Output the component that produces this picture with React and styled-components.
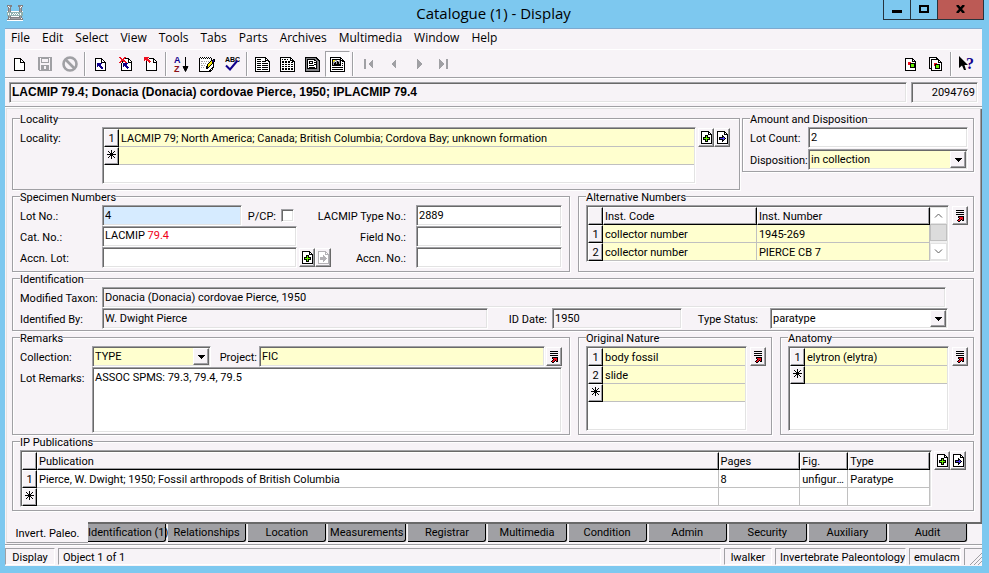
import React from "react";
import styled, { createGlobalStyle, css } from "styled-components";

const c = {
  sky: "#7dc8ef",
  face: "#f7f3f7",
  grey: "#a0a0a4",
  dark: "#696969",
  light: "#e3e3e3",
  line: "#c0c0c0",
  yellow: "#ffffcf",
};

const Global = createGlobalStyle`
  *, *::before, *::after { box-sizing: border-box; }
  body { margin: 0; background: ${c.sky}; }
  body, button, input, select, textarea {
    font-family: Roboto, "Liberation Sans", sans-serif;
    font-size: 11px;
    line-height: 13px;
    color: #000;
  }
`;

const sunken = css`
  border: 1px solid;
  border-color: ${c.grey} #fff #fff ${c.grey};
  box-shadow: inset 1px 1px 0 ${c.dark}, inset -1px -1px 0 ${c.light};
`;

const raised = css`
  border: 1px solid;
  border-color: #fff ${c.dark} ${c.dark} #fff;
  box-shadow: inset -1px -1px 0 ${c.grey};
`;

/* ---------- window frame ---------- */

const Window = styled.div`
  min-height: 100vh;
  padding: 0 7px 6px 5px;
  background: ${c.sky};
`;

const TitleBar = styled.header`
  display: grid;
  grid-template-columns: 1fr auto 1fr;
  height: 28px;
`;

const TitleIcon = styled.div`
  padding: 5px 0 0 2px;
`;

const Title = styled.h1`
  margin: 0;
  font: 400 15px/26px "Open Sans", sans-serif;
`;

const WindowButtons = styled.div`
  display: flex;
  justify-content: flex-end;
  height: 20px;
  margin-right: -2px;
`;

const WindowButton = styled.button`
  display: flex;
  align-items: center;
  justify-content: center;
  width: ${(p) => (p.$close ? 47 : 28)}px;
  padding: 0 0 2px;
  border: 1px solid #26343e;
  border-top: 0;
  margin-left: -1px;
  background: ${(p) => (p.$close ? "#bc5a55" : "transparent")};
`;

const Client = styled.div`
  border-top: 1px solid #7da9cf;
  background: ${c.face};
`;

const MenuBar = styled.nav`
  display: flex;
  height: 21px;
  border-bottom: 1px solid #fff;
`;

const MenuItem = styled.button`
  padding: 0 6px 2px;
  border: 0;
  background: none;
  font: 400 12px/18px "Open Sans", sans-serif;
`;

const ToolBar = styled.div`
  display: flex;
  height: 29px;
  padding: 0 3px 0 2px;
  border-bottom: 1px solid #fff;
  box-shadow: inset 0 -1px 0 ${c.grey};
`;

const ToolButton = styled.button`
  display: flex;
  align-items: center;
  justify-content: center;
  width: 25px;
  height: 26px;
  margin-top: 1px;
  padding: 0;
  border: 1px solid transparent;
  background: none;
  ${(p) =>
    p.$pressed &&
    css`
      border-color: ${c.grey} #fff #fff ${c.grey};
      background: #fdfbfd;
    `}
`;

const ToolSeparator = styled.i`
  width: 2px;
  height: 24px;
  margin: 2px;
  background: linear-gradient(90deg, ${c.grey} 50%, #fff 50%);
`;

const Spacer = styled.div`
  flex: 1;
`;

const RecordStrip = styled.div`
  display: flex;
  gap: 4px;
  padding: 3px 4px;
  height: 29px;
  border-bottom: 1px solid #fff;
  box-shadow: inset 0 -1px 0 ${c.grey};
`;

const RecordTitle = styled.div`
  flex: 1;
  height: 21px;
  padding: 0 2px;
  ${sunken}
  font-family: "Liberation Sans", Arial, sans-serif;
  font-size: 12px;
  font-weight: 700;
  line-height: 18px;
`;

const RecordNumber = styled.div`
  width: 67px;
  height: 21px;
  padding: 0 2px;
  ${sunken}
  text-align: right;
  font-size: 11px;
  line-height: 19px;
`;

/* ---------- form ---------- */

const Panel = styled.main`
  margin: 0 0 0 1px;
  padding: 3px 8px 11px 5px;
  border: solid ${c.light};
  border-width: 1px 0 0 1px;
  box-shadow: inset -1px 0 0 ${c.dark}, inset -2px 0 0 ${c.grey};
`;

const Columns = styled.div`
  display: grid;
  grid-template-columns: ${(p) => p.$parts.map((n) => `minmax(0, ${n}fr)`).join(" ")};
  column-gap: ${(p) => p.$gap}px;
  align-items: ${(p) => p.$align || "stretch"};
`;

const Group = styled.fieldset`
  min-width: 0;
  margin: 0;
  padding: 2px ${(p) => p.$right || 5}px ${(p) => p.$bottom || 1}px 7px;
  border: 1px solid ${c.grey};
  box-shadow: 1px 1px 0 #fff, inset 1px 1px 0 #fff;
`;

const Legend = styled.legend`
  padding: 0;
  height: 13px;
  line-height: 15px;
  background: ${c.face};
`;

const Row = styled.div`
  display: flex;
  align-items: flex-start;
  margin-bottom: ${(p) => p.$after || 0}px;
`;

const Label = styled.label`
  flex: none;
  width: ${(p) => (p.$width ? p.$width + "px" : "auto")};
  height: 21px;
  padding-right: ${(p) => p.$gap || 0}px;
  text-align: ${(p) => (p.$end ? "right" : "left")};
  line-height: 23px;
  white-space: nowrap;
`;

const share = css`
  flex: ${(p) => (p.$fixed ? `none` : `${p.$grow || 1} 1 ${p.$grow || 1}px`)};
  width: ${(p) => (p.$fixed ? p.$fixed + "px" : "auto")};
  min-width: 0;
`;

const fieldBox = css`
  ${share}
  height: 21px;
  margin: 0;
  padding: 0 2px 1px;
  ${sunken}
  border-radius: 0;
  outline: 0;
  background: ${(p) => p.$fill || "#fff"};
`;

const Field = styled.input`
  ${fieldBox}
`;

const FieldText = styled.output`
  ${fieldBox}
  line-height: 18px;
`;

const Red = styled.span`
  color: #f00018;
`;

const Memo = styled.textarea`
  flex: 1;
  min-width: 0;
  height: 66px;
  margin: 0;
  padding: 3px 2px 2px;
  ${sunken}
  border-radius: 0;
  outline: 0;
  resize: none;
  background: #fff;
`;

const CheckBox = styled.input`
  appearance: none;
  width: 13px;
  height: 13px;
  margin: 3px 0 0 4px;
  ${sunken}
  background: #fff;
`;

const Trailer = styled.div`
  display: flex;
  flex: none;
  width: ${(p) => p.$width}px;
  padding: 1px 0 0 ${(p) => p.$pad || 2}px;
`;

const SelectBox = styled.div`
  position: relative;
  display: flex;
  ${share}
`;

const Select = styled.select`
  ${fieldBox}
  appearance: none;
`;

const SelectArrow = styled.span`
  position: absolute;
  top: 2px;
  right: 2px;
  bottom: 2px;
  display: flex;
  align-items: center;
  justify-content: center;
  width: 16px;
  ${raised}
  background: ${c.face};
  pointer-events: none;
`;

const SmallButton = styled.button`
  display: flex;
  flex: none;
  align-items: center;
  justify-content: center;
  width: 16px;
  height: 19px;
  padding: 0;
  ${raised}
  background: ${c.face};
`;

const GridBox = styled.div`
  display: flex;
  flex: 1;
  align-items: flex-start;
  min-width: 0;
  height: ${(p) => p.$height || 57}px;
  padding: 1px;
  overflow: hidden;
  ${sunken}
  background: #fff;
`;

const Table = styled.table`
  flex: 1;
  width: 100%;
  min-width: 0;
  table-layout: fixed;
  border-collapse: separate;
  border-spacing: 0;
`;

const Col = styled.col`
  width: ${(p) => p.$w};
`;

const headCell = css`
  height: 18px;
  border: 1px solid;
  border-color: #fff #000 #000 #fff;
  box-shadow: inset -1px -1px 0 ${c.grey};
  background: ${c.face};
  font-weight: 400;
  line-height: 14px;
`;

const HeadCell = styled.th`
  padding: 2px 1px 0;
  ${headCell}
  text-align: left;
`;

const RowHead = styled.th`
  padding: ${(p) => (p.$marker ? 0 : 2)}px 0 0;
  ${headCell}
  text-align: center;
`;

const Cell = styled.td`
  height: 18px;
  padding: 2px 2px 0;
  border: solid ${c.line};
  border-width: 0 ${(p) => (p.$rule ? 1 : 0)}px 1px 0;
  background: ${(p) => p.$fill || "#fff"};
  line-height: 15px;
  white-space: nowrap;
  overflow: hidden;
  text-overflow: ellipsis;
`;

const ScrollBar = styled.div`
  display: flex;
  flex: none;
  flex-direction: column;
  width: 17px;
  height: 53px;
  background: #f0f0f0;
`;

const ScrollButton = styled.button`
  display: flex;
  align-items: center;
  justify-content: center;
  height: 17px;
  padding: 0;
  border: 1px solid ${c.light};
  background: #fff;
`;

const ScrollThumb = styled.div`
  height: 17px;
  margin-bottom: auto;
  border: 1px solid ${c.line};
  background: #dcdcdc;
`;

/* ---------- tabs and status bar ---------- */

const TabStrip = styled.nav`
  display: flex;
`;

const TabRun = styled.div`
  display: flex;
  flex: 1;
  min-width: 0;
  height: 20px;
  padding-right: 15px;
  border-top: 2px solid ${c.dark};
`;

const Tab = styled.button`
  flex: 1 1 0;
  min-width: 0;
  height: 18px;
  padding: 0 0 1px;
  border: solid #000;
  border-width: 0 1px 1px 0;
  border-bottom-right-radius: 3px;
  box-shadow: 1px 0 0 ${c.light};
  margin-right: 2px;
  background: ${c.grey};
  white-space: nowrap;
  &:last-child { margin-right: 0; }
`;

const ActiveTab = styled.button`
  flex: none;
  width: 82px;
  height: 21px;
  margin-left: 1px;
  padding: 3px 0 0;
  border: 0;
  border-left: 1px solid ${c.light};
  border-bottom: 1px solid ${c.grey};
  background: ${c.face};
`;

const StatusBar = styled.footer`
  display: flex;
  gap: 3px;
  margin-top: 1px;
  padding: 3px 0 1px;
  border-top: 1px solid ${c.grey};
  box-shadow: inset 0 1px 0 #fff;
`;

const StatusCell = styled.div`
  flex: ${(p) => (p.$fill ? 1 : "none")};
  width: ${(p) => (p.$width ? p.$width + "px" : "auto")};
  height: 17px;
  padding: 0 4px;
  border: 1px solid;
  border-color: ${c.grey} #fff #fff ${c.grey};
  text-align: ${(p) => (p.$center ? "center" : "left")};
  line-height: 18px;
  white-space: nowrap;
`;

const Grip = styled.div`
  display: flex;
  align-items: flex-end;
  justify-content: flex-end;
  width: 18px;
  height: 17px;
  border: solid ${c.grey};
  border-width: 1px 0 0 1px;
`;

/* ---------- icons ---------- */

const ink = {
  k: "#000", w: "#fff", g: "#66f000", b: "#10008c", v: "#4838e8",
  r: "#ee1020", y: "#f6e600", s: "#a0a0a4", m: "#808084", t: "#8fb0b0", n: "#8c1018",
};

function Pixels({ rows, tint }) {
  const w = Math.max(...rows.map((r) => r.length));
  return (
    <svg width={w} height={rows.length} shapeRendering="crispEdges" aria-hidden="true">
      {rows.flatMap((row, y) =>
        [...row].map((ch, x) =>
          ch === "." ? null : (
            <rect key={x + "-" + y} x={x} y={y} width="1" height="1"
              fill={tint && ch !== "w" ? tint : ink[ch]} />
          )
        )
      )}
    </svg>
  );
}

const sheet = [
  "kkkkkkk....", "kwwwwwkk...", "kwwwwwkwk..", "kwwwwwkwwk.", "kwwwwwkkkkk",
  "kwwwwwwwwwk", "kwwwwwwwwwk", "kwwwwwwwwwk", "kwwwwwwwwwk", "kwwwwwwwwwk",
  "kwwwwwwwwwk", "kwwwwwwwwwk", "kkkkkkkkkkk",
];
const back = [
  ...sheet.slice(0, 5),
  "kwbbbbbwwwk", "kwbbbbwwwwk", "kwbbbbwwwwk", "kwbwbbbwwwk", "kwwwwbbbwwk",
  "kwwwwwbbwwk", "kwwwwwwwwwk", "kkkkkkkkkkk",
];
const backCross = [
  "rr...rr......", ".rr.rrkkkk...", "..rrrwwwwkk..", "..rrrrwwwkwk.", ".rrkrrrwwkwwk",
  "rrwkwwrrwkkkk", "..kwbbbbbwwwk", "..kwbbbbwwwwk", "..kwbbbbwwwwk", "..kwbwbbbwwwk",
  "..kwwwwbbbwwk", "..kwwwwwbwwwk", "..kwwwwwwwwwk", "..kkkkkkkkkkk",
];
const redBack = [
  "rrrrr........", "rrrr.kkkkk...", "rrrrrwwwwkk..", "r.rrrrwwwkwk.", "..kwrrrwwkwwk",
  "..kwwrwwwkkkk", "..kwwwwwwwwwk", "..kwwwwwwwwwk", "..kwwwwwwwwwk", "..kwwwwwwwwwk",
  "..kwwwwwwwwwk", "..kwwwwwwwwwk", "..kwwwwwwwwwk", "..kkkkkkkkkkk",
];
const disk = [
  "ssssssssssssss", "sswsssssssswss", "ss.s......s.ss", "ss.s......s.ss", "ss.s......s.ss",
  "ss.ssssssss.ss", "ss..........ss", "ss..........ss", "ss.ssssssss.ss", "ss.sss..sss.ss",
  "ss.sss..sss.ss", "ss.sss..sss.ss", "ss.ssssssss.ss", ".sssssssssssss",
];
const listPage = [
  "kkkkkkkkkkk....", "kwwwwwwwwwkk...", "kwkkkkwwwwkwk..", "kwwwwwwwwwkkkk.", "kwkkkkwkkkkwwkk",
  "kwwwwwwwwwwwwwk", "kwkkkkwkkkkkkwk", "kwwwwwwwwwwwwwk", "kwkkkkwkkkkkkwk", "kwwwwwwwwwwwwwk",
  "kwkkkkwkkkkkkwk", "kwwwwwwwwwwwwwk", "kwkkkkwkkkkkkwk", "kwwwwwwwwwwwwwk", "kkkkkkkkkkkkkkk",
];
const dotPage = [
  "kkkkkkkkkkk....", "kwwwwwwwwwkk...", "kwkwkkwkwwkwk..", "kwwwwwwwwwkkkk.", "kwkkwkkwkkwwkkk",
  "kwkkwkkwkkwkkwk", "kwwwwwwwwwwwwwk", "kwkkwkkwkkwkkwk", "kwwwwwwwwwwwwwk", "kwkkwkkwkkwkkwk",
  "kwwwwwwwwwwwwwk", "kwkkwkkwkkwkkwk", "kwkkwkkwkkwkkwk", "kwwwwwwwwwwwwwk", "kkkkkkkkkkkkkkk",
];
const formPage = [
  "kkkkkkkkkkkk...", "kmmmmmmmmmmkk..", "kmkkkkkkkkmmkk.", "kmkwwwwwwkkmmkk", "kmkwkkkkwwwkmmk",
  "kmkwkwwkwkkkmmk", "kmkwkkkkwwwkmmk", "kmkwwwwwwkkkmmk", "kmkwkkkkkwwkmmk", "kmkwwwwwwwwkmmk",
  "kmkwkkkkkkwkmmk", "kmkkkkkkkkkkmmk", "kmmmmmmmmmmmmmk", "kmmmmmmmmmmmmmk", "kkkkkkkkkkkkkkk",
];
const picturePage = [
  "kkkkkkkkkkk....", "kwwwwwwwwwkk...", "kwkkkkkkkkkwk..", "kwkyysswwskkkk.", "kwkyswsksskwkkk",
  "kwksskskkskwwwk", "kwkskkskkskwkwk", "kwkskkkkkkkwwwk", "kwkkkkkkkkkwkwk", "kwwwwwwwwwwwwwk",
  "kwkkkkkkkkkkkwk", "kwwwwwwwwwwwwwk", "kwkkkkkkkkkkkwk", "kwwwwwwwwwwwwwk", "kkkkkkkkkkkkkkk",
];
const notePad = [
  ".kwkwkwkwkwk....", "kwkwkwkwkwkwk...", "kwwwwwwwwwwwk.kk", "kwwwwwwwwwwwkkbk", "kwsswswswswkybbk",
  "kwwwwwwwwwkyykk.", "kwswswswwkyyykk.", "kwwwwwwwkyyykwk.", "kwsswswwkyykwwk.", "kwwwwwwkkykwwwk.",
  "kwswswwkkkwwwkk.", "kwwwwwwkkwwwkk..", "kwwwwwwwwwwkwk..", "kwwwwwwwwwkkk...", "kkkkkkkkkkkk....",
];
const record = [
  "kkkkkkkk...", "kwwwwwwkk..", "kwwwwwwkwk.", "kwwwwwwkkkk", "kwwrrrwwwwk", "kwwrrkkkkkk",
  "kwwrrkgggkk", "kwwwwkgggkk", "kwwwwkgggkk", "kwwwwkkkkkk", "kwwwwwwwwwk", "kwwwwwwwwwk", "kkkkkkkkkkk",
];
const records = [
  "kkkkkkkk.....", "kwwwwwwkk....", "kwkkkkkkkk...", "kwkwwwwwwkk..", "kwkwwwwwwkwk.", "kwkwwwwwwkkkk",
  "kwkwwrrrwwwwk", "kwkwwrkkkkkwk", "kwkwwrkgggkwk", "kwkwwwkgggkwk", "kwkwwwkgggkwk", "kkkwwwkkkkkwk",
  "..kwwwwwwwwwk", "..kkkkkkkkkkk",
];
const addPage = [
  "kkkkkkkk...", "kwwwwwwkk..", "kwwwwwwkwk.", "kwwwwwwkkkk", "kwwwkkkwwwk", "kwwwkgkwwwk", "kwkkkgkkkwk",
  "kwkgggggkwk", "kwkkkgkkkwk", "kwwwkgkwwwk", "kwwwkkkwwwk", "kwwwwwwwwwk", "kkkkkkkkkkk",
];
const goPage = [
  "kkkkkkkk...", "kwwwwwwkk..", "kwwwwwwkwk.", "kwwwwwwkkkk", "kwwwwkwwwwk", "kwwwwkkwwwk", "kwkkkkvkwwk",
  "kwkvvvvvkwk", "kwkkkkvkwwk", "kwwwwkkwwwk", "kwwwwkwwwwk", "kwwwwwwwwwk", "kkkkkkkkkkk",
];
const lookup = [
  "kkkkkkkk", "........", "kkkkkkkk", "........", "kkkkkkkk", "........", "..kkkkkk",
  "..krrrrk", "...krrrk", "..krrkrk", ".krrk.kk", "..kk....",
];
const star = [
  "....k....", ".k..k..k.", "..k.k.k..", "...kkk...", "kkkkkkkkk", "...kkk...", "..k.k.k..", ".k..k..k.", "....k....",
];
const logo = [
  "mmmmm......mmmmm", "mwsmm......mmswm", ".mwm........mwm.", ".msm........msm.", ".msm........msm.",
  ".msm........msm.", "wmsmwwwwwwwwmsmw", "tttttttttttttttt", "twtwttwtwtwttwtt", "twtwtwtwtwtwtwtt",
  "tttttttttttttttt", ".msmwwwwwwwwmsm.", ".msmmmmmmmmmmsm.", ".mwmsssssssssmwm", "mmmmmmmmmmmmmmmm", "wwwwwwwwwwwwwwww",
];

const NoEntry = () => (
  <svg width="16" height="16" fill="none" stroke={c.grey} aria-hidden="true">
    <circle cx="8" cy="8" r="6.5" strokeWidth="2.6" />
    <path d="M3.5 3.5 12.5 12.5" strokeWidth="2.6" />
  </svg>
);
const SortIcon = () => (
  <svg width="17" height="20" aria-hidden="true">
    <text x="1" y="9" fontFamily="Liberation Sans" fontWeight="700" fontSize="9" fill={ink.b}>A</text>
    <text x="1" y="18" fontFamily="Liberation Sans" fontWeight="700" fontSize="9" fill={ink.n}>Z</text>
    <path d="M12.5 3V17M10 12.5h5L12.5 17.5Z" stroke="#000" fill="#000" strokeWidth="1" />
  </svg>
);
const SpellIcon = () => (
  <svg width="16" height="16" aria-hidden="true">
    <text x="1" y="6" fontFamily="Liberation Sans" fontWeight="700" fontSize="7">ABC</text>
    <path d="M2 9.500 6 13.500 13.500 4.500" fill="none" stroke={ink.b} strokeWidth="2" />
  </svg>
);
const HelpIcon = () => (
  <svg width="20" height="20" aria-hidden="true">
    <path d="M2 2V14L5 11.500 7 16H9L7.500 11H11Z" fill="#000" />
    <text x="9" y="15" fontFamily="Liberation Serif" fontWeight="700" fontSize="16" fill={ink.b}>?</text>
  </svg>
);
const NavIcon = ({ d }) => (
  <svg width="11" height="10" fill={c.grey} shapeRendering="crispEdges" aria-hidden="true"><path d={d} /></svg>
);
const Caret = () => (
  <svg width="7" height="4" shapeRendering="crispEdges" aria-hidden="true"><path d="M0 0H7L4 4H3Z" /></svg>
);
const Chevron = ({ d }) => (
  <svg width="9" height="7" fill="none" stroke="#606060" aria-hidden="true"><path d={d} /></svg>
);

/* ---------- composed parts ---------- */

const Tool = ({ name, pressed, children }) => (
  <ToolButton type="button" aria-label={name} aria-pressed={pressed} $pressed={pressed}>{children}</ToolButton>
);

const Attach = ({ width, pad, disabled }) => (
  <Trailer $width={width} $pad={pad}>
    <SmallButton type="button" aria-label="Attach record"><Pixels rows={addPage} /></SmallButton>
    <SmallButton type="button" aria-label="View attached record" disabled={disabled}>
      <Pixels rows={goPage} tint={disabled ? "#b4b2b6" : undefined} />
    </SmallButton>
  </Trailer>
);

const Lookup = ({ width, pad }) => (
  <Trailer $width={width} $pad={pad}>
    <SmallButton type="button" aria-label="Lookup list"><Pixels rows={lookup} /></SmallButton>
  </Trailer>
);

function DropDown({ id, value, fill, grow }) {
  return (
    <SelectBox $grow={grow}>
      <Select id={id} defaultValue={value} $fill={fill}><option>{value}</option></Select>
      <SelectArrow><Caret /></SelectArrow>
    </SelectBox>
  );
}

function Grid({ name, height, widths, heads, rows, fill, rule, scroll }) {
  return (
    <GridBox $height={height}>
      <Table aria-label={name}>
        <colgroup>
          <Col $w="15px" />
          {widths.map((w, i) => <Col key={i} $w={w} />)}
        </colgroup>
        {heads && (
          <thead>
            <tr>
              <HeadCell />
              {heads.map((h) => <HeadCell key={h} scope="col">{h}</HeadCell>)}
            </tr>
          </thead>
        )}
        <tbody>
          {rows.map((cells, i) => (
            <tr key={i}>
              <RowHead scope="row" $marker={cells[0] === "*"}>
                {cells[0] === "*" ? <Pixels rows={star} /> : cells[0]}
              </RowHead>
              {widths.map((w, j) => <Cell key={j} $fill={fill} $rule={rule}>{cells[j + 1]}</Cell>)}
            </tr>
          ))}
        </tbody>
      </Table>
      {scroll && (
        <ScrollBar>
          <ScrollButton type="button" aria-label="Scroll up"><Chevron d="M1 5.500 4.500 2 8 5.500" /></ScrollButton>
          <ScrollThumb />
          <ScrollButton type="button" aria-label="Scroll down"><Chevron d="M1 1.500 4.500 5 8 1.500" /></ScrollButton>
        </ScrollBar>
      )}
    </GridBox>
  );
}

const menus = ["File", "Edit", "Select", "View", "Tools", "Tabs", "Parts", "Archives", "Multimedia", "Window", "Help"];
const tabs = ["Identification (1)", "Relationships", "Location", "Measurements", "Registrar", "Multimedia",
  "Condition", "Admin", "Security", "Auxiliary", "Audit"];

export default function App() {
  return (
    <Window>
      <Global />
      <TitleBar>
        <TitleIcon><Pixels rows={logo} /></TitleIcon>
        <Title>Catalogue (1) - Display</Title>
        <WindowButtons>
          <WindowButton type="button" aria-label="Minimize">
            <svg width="10" height="9" aria-hidden="true"><rect y="6" width="10" height="3" /></svg>
          </WindowButton>
          <WindowButton type="button" aria-label="Maximize">
            <svg width="10" height="8" aria-hidden="true"><rect x="1" y="1" width="8" height="6" fill="none" stroke="#000" strokeWidth="2" /></svg>
          </WindowButton>
          <WindowButton type="button" aria-label="Close" $close>
            <svg width="10" height="8" aria-hidden="true"><path d="M1 0 8 8M8 0 1 8" stroke="#000" strokeWidth="2.5" /></svg>
          </WindowButton>
        </WindowButtons>
      </TitleBar>
      <Client>
        <MenuBar>{menus.map((m) => <MenuItem key={m} type="button">{m}</MenuItem>)}</MenuBar>
        <ToolBar role="toolbar">
          <Tool name="New"><Pixels rows={sheet} /></Tool>
          <Tool name="Save"><Pixels rows={disk} /></Tool>
          <Tool name="Cancel"><NoEntry /></Tool>
          <ToolSeparator />
          <Tool name="Previous view"><Pixels rows={back} /></Tool>
          <Tool name="Discard view"><Pixels rows={backCross} /></Tool>
          <Tool name="Return"><Pixels rows={redBack} /></Tool>
          <ToolSeparator />
          <Tool name="Sort"><SortIcon /></Tool>
          <Tool name="Edit notes"><Pixels rows={notePad} /></Tool>
          <Tool name="Spelling"><SpellIcon /></Tool>
          <ToolSeparator />
          <Tool name="List view"><Pixels rows={listPage} /></Tool>
          <Tool name="Contact sheet"><Pixels rows={dotPage} /></Tool>
          <Tool name="Form view"><Pixels rows={formPage} /></Tool>
          <Tool name="Details view" pressed><Pixels rows={picturePage} /></Tool>
          <ToolSeparator />
          <Tool name="First record"><NavIcon d="M1 0h2v10H1zM10 0v10L5 5z" /></Tool>
          <Tool name="Previous record"><NavIcon d="M8 0v10L3 5z" /></Tool>
          <Tool name="Next record"><NavIcon d="M4 0v10L9 5z" /></Tool>
          <Tool name="Last record"><NavIcon d="M1 0v10L6 5zM8 0h2v10H8z" /></Tool>
          <Spacer />
          <Tool name="Report record"><Pixels rows={record} /></Tool>
          <Tool name="Report all records"><Pixels rows={records} /></Tool>
          <ToolSeparator />
          <Tool name="What is this"><HelpIcon /></Tool>
        </ToolBar>
        <RecordStrip>
          <RecordTitle>LACMIP 79.4; Donacia (Donacia) cordovae Pierce, 1950; IPLACMIP 79.4</RecordTitle>
          <RecordNumber>2094769</RecordNumber>
        </RecordStrip>

        <Panel>
          <Columns $parts={[728, 232]} $gap={2} $align="start">
            <Group $bottom={5} $right={7}>
              <Legend>Locality</Legend>
              <Row>
                <Label as="span" $width={82}>Locality:</Label>
                <Grid name="Locality" widths={["auto"]} fill={c.yellow}
                  rows={[["1", "LACMIP 79; North America; Canada; British Columbia; Cordova Bay; unknown formation"], ["*"]]} />
                <Attach width={36} />
              </Row>
            </Group>
            <Group>
              <Legend>Amount and Disposition</Legend>
              <Row $after={1}>
                <Label htmlFor="count" $width={58}>Lot Count:</Label>
                <Field id="count" defaultValue="2" />
              </Row>
              <Row>
                <Label htmlFor="disposition" $width={58}>Disposition:</Label>
                <DropDown id="disposition" value="in collection" fill={c.yellow} />
              </Row>
            </Group>
          </Columns>

          <Columns $parts={[558, 396]} $gap={8}>
            <Group $bottom={3} $right={7}>
              <Legend>Specimen Numbers</Legend>
              <Row>
                <Label htmlFor="lot" $width={82}>Lot No.:</Label>
                <Field id="lot" defaultValue="4" $fill="#d6ebff" />
                <Label htmlFor="pcp" $width={34} $end>P/CP:</Label>
                <Trailer $width={36} $pad={1}><CheckBox id="pcp" type="checkbox" /></Trailer>
                <Label htmlFor="type-no" $width={104} $gap={10} $end>LACMIP Type No.:</Label>
                <Field id="type-no" defaultValue="2889" $fixed={146} />
              </Row>
              <Row>
                <Label id="cat-label" as="span" $width={82}>Cat. No.:</Label>
                <FieldText aria-labelledby="cat-label">LACMIP <Red>79.4</Red></FieldText>
                <Label htmlFor="field-no" $width={119} $gap={10} $end>Field No.:</Label>
                <Field id="field-no" $fixed={146} />
              </Row>
              <Row>
                <Label htmlFor="accn-lot" $width={82}>Accn. Lot:</Label>
                <Field id="accn-lot" />
                <Attach width={35} disabled />
                <Label htmlFor="accn-no" $width={84} $gap={10} $end>Accn. No.:</Label>
                <Field id="accn-no" $fixed={146} />
              </Row>
            </Group>
            <Group>
              <Legend>Alternative Numbers</Legend>
              <Row>
                <Grid name="Alternative Numbers" widths={["45%", "auto"]} heads={["Inst. Code", "Inst. Number"]}
                  rows={[["1", "collector number", "1945-269"], ["2", "collector number", "PIERCE CB 7"]]}
                  fill={c.yellow} rule scroll />
                <Lookup width={19} pad={3} />
              </Row>
            </Group>
          </Columns>

          <Group>
            <Legend>Identification</Legend>
            <Row>
              <Label htmlFor="taxon" $width={82}>Modified Taxon:</Label>
              <Field id="taxon" readOnly defaultValue="Donacia (Donacia) cordovae Pierce, 1950" $fill={c.face} />
              <Trailer $width={22} />
            </Row>
            <Row>
              <Label htmlFor="by" $width={82}>Identified By:</Label>
              <Field id="by" readOnly defaultValue="W. Dwight Pierce" $fill={c.face} $grow={386} />
              <Label htmlFor="id-date" $width={64} $gap={5} $end>ID Date:</Label>
              <Field id="id-date" readOnly defaultValue="1950" $fill={c.face} $grow={130} />
              <Label htmlFor="status" $width={88} $gap={12} $end>Type Status:</Label>
              <DropDown id="status" value="paratype" grow={178} />
              <Trailer $width={20} />
            </Row>
          </Group>

          <Columns $parts={[558, 194, 194]} $gap={8}>
            <Group $right={7}>
              <Legend>Remarks</Legend>
              <Row>
                <Label htmlFor="collection" $width={72}>Collection:</Label>
                <DropDown id="collection" value="TYPE" fill={c.yellow} grow={119} />
                <Label htmlFor="project" $width={48} $gap={2} $end>Project:</Label>
                <Field id="project" defaultValue="FIC" $fill={c.yellow} $grow={286} />
                <Lookup width={17} pad={1} />
              </Row>
              <Row>
                <Label htmlFor="lot-remarks" $width={72}>Lot Remarks:</Label>
                <Memo id="lot-remarks" defaultValue="ASSOC SPMS: 79.3, 79.4, 79.5" />
              </Row>
            </Group>
            <Group>
              <Legend>Original Nature</Legend>
              <Row>
                <Grid name="Original Nature" height={85} widths={["auto"]} fill={c.yellow}
                  rows={[["1", "body fossil"], ["2", "slide"], ["*"]]} />
                <Lookup width={19} pad={3} />
              </Row>
            </Group>
            <Group>
              <Legend>Anatomy</Legend>
              <Row>
                <Grid name="Anatomy" height={85} widths={["auto"]} fill={c.yellow}
                  rows={[["1", "elytron (elytra)"], ["*"]]} />
                <Lookup width={19} pad={3} />
              </Row>
            </Group>
          </Columns>

          <Group $bottom={3}>
            <Legend>IP Publications</Legend>
            <Row>
              <Grid name="IP Publications" widths={["auto", "9%", "48px", "9%"]} heads={["Publication", "Pages", "Fig.", "Type"]}
                rows={[["1", "Pierce, W. Dwight; 1950; Fossil arthropods of British Columbia", "8", "unfigured", "Paratype"], ["*"]]}
                rule />
              <Attach width={36} />
            </Row>
          </Group>
        </Panel>

        <TabStrip>
          <ActiveTab type="button" aria-current="page">Invert. Paleo.</ActiveTab>
          <TabRun>{tabs.map((t) => <Tab key={t} type="button">{t}</Tab>)}</TabRun>
        </TabStrip>
        <StatusBar>
          <StatusCell $width={50} $center>Display</StatusCell>
          <StatusCell $fill>Object 1 of 1</StatusCell>
          <StatusCell $width={48} $center>lwalker</StatusCell>
          <StatusCell $width={131}>Invertebrate Paleontology</StatusCell>
          <StatusCell $width={52} $center>emulacm</StatusCell>
          <Grip>
            <svg width="12" height="12" stroke={c.grey} aria-hidden="true"><path d="M0 12 12 0M4 12 12 4M8 12 12 8" /></svg>
          </Grip>
        </StatusBar>
      </Client>
    </Window>
  );
}
